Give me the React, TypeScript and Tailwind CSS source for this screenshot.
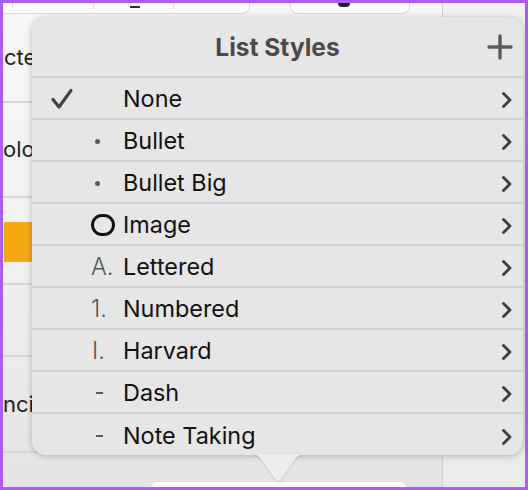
import React from "react";

const font = { fontFamily: "Inter, 'Noto Sans', sans-serif" };

function Chevron() {
  return (
    <svg width="12" height="16" viewBox="0 0 12 16" className="shrink-0 mt-[2px]">
      <path d="M2.5 1.5 L9 8 L2.5 14.5" fill="none" stroke="#3d3d3d" strokeWidth="2.8" strokeLinecap="round" strokeLinejoin="round" />
    </svg>
  );
}

type Row = { label: string; marker: React.ReactNode };

const Dot = () => <span className="block w-[5px] h-[5px] rounded-full bg-[#5a5a5a] ml-[1px]" />;
const Dash = () => <span className="block w-[7px] h-[2px] bg-[#5a5a5a] ml-[2px]" />;

const rows: Row[] = [
  {
    label: "None",
    marker: (
      <svg width="24" height="22" viewBox="0 0 24 22" className="ml-[-44px]">
        <path d="M3 11.5 L9 19 L21 2.5" fill="none" stroke="#444" strokeWidth="3.2" strokeLinecap="round" strokeLinejoin="round" />
      </svg>
    ),
  },
  { label: "Bullet", marker: <Dot /> },
  { label: "Bullet Big", marker: <Dot /> },
  {
    label: "Image",
    marker: <span className="block w-[24px] h-[22px] rounded-full border-[3.5px] border-[#111] ml-[-3px]" />,
  },
  { label: "Lettered", marker: <span className="text-[#555] font-light text-[23.5px] leading-none ml-[-3px]">A.</span> },
  { label: "Numbered", marker: <span className="text-[#555] font-light text-[23.5px] leading-none ml-[-3px]">1.</span> },
  { label: "Harvard", marker: <span className="text-[#555] font-light text-[23.5px] leading-none ml-[-2px]">I.</span> },
  { label: "Dash", marker: <Dash /> },
  { label: "Note Taking", marker: <Dash /> },
];

export default function App() {
  return (
    <div className="w-[528px] h-[490px] relative overflow-hidden border-[3px] border-[#ad5cf4] bg-[#f4f4f4]" style={font}>
      {/* background app */}
      <div className="flex h-full">
        <div className="w-[439px] flex flex-col bg-gradient-to-b from-[#f7f7f7] via-[#f1f1f1] to-[#e4e4e4]">
          {/* top toolbar */}
          <div className="h-[11px] flex shrink-0">
            <div className="w-[247px] h-[11px] bg-white rounded-br-[8px] border-b border-r border-[#d8d8d8] relative">
              <span className="absolute left-[9px] top-0 h-[6px] w-px bg-[#ddd]" />
              <span className="absolute left-[90px] top-0 h-[6px] w-px bg-[#ddd]" />
              <span className="absolute left-[170px] top-0 h-[6px] w-px bg-[#ddd]" />
              <span className="absolute left-[127px] top-[3px] h-[2px] w-[10px] bg-[#333]" />
            </div>
            <div className="ml-[40px] w-[120px] h-[11px] bg-white rounded-b-[8px] border-b border-x border-[#d8d8d8] relative">
              <span className="absolute left-[47px] top-0 w-[12px] h-[4px] rounded-b-full bg-[#222]" />
            </div>
          </div>
          <div className="h-[89px] shrink-0 flex items-center border-b-2 border-[#d6d6d6]">
            <span className="text-[22px] text-[#222] ml-[1px]">cter</span>
          </div>
          <div className="h-[95px] shrink-0 flex items-center border-b-2 border-[#d6d6d6]">
            <span className="text-[22px] text-[#222]">olor</span>
          </div>
          <div className="h-[87px] shrink-0 flex items-center border-b-2 border-[#d6d6d6]">
            <div className="w-[40px] h-[40px] bg-[#f6a714] ml-[1px] mt-[2px]" />
          </div>
          <div className="h-[72px] shrink-0 border-b-2 border-[#d6d6d6]" />
          <div className="h-[96px] shrink-0 flex items-center border-b-2 border-[#d6d6d6]">
            <span className="text-[22px] text-[#222]">ncing</span>
          </div>
          <div className="flex-1 flex items-end">
            <div className="ml-[147px] w-[257px] h-[6px] bg-white rounded-t-[6px] border-t border-x border-[#ddd]" />
          </div>
        </div>
        <div className="flex-1 border-l border-[#cfcfcf] bg-gradient-to-b from-[#f2f2f2] via-[#e4e4e4] to-[#ececec]" />
      </div>

      {/* popover */}
      <div className="absolute left-[29px] top-[14px] w-[491px] h-[438px] rounded-[14px] bg-[#e6e6e6] shadow-[0_1px_6px_rgba(0,0,0,0.25)] flex flex-col overflow-hidden">
        <div className="h-[59px] shrink-0 relative flex items-center justify-center pt-[2px]">
          <span className="text-[24.5px] font-bold text-[#4a4a4a]">List Styles</span>
          <svg width="26" height="26" viewBox="0 0 26 26" className="absolute right-[10px] top-[17px]">
            <path d="M13 2 V24 M2 13 H24" stroke="#5a5a5a" strokeWidth="3.4" strokeLinecap="round" />
          </svg>
        </div>
        {rows.map((r, i) => (
          <div
            key={r.label}
            className={`border-t-2 border-[#d0d0d0] flex items-center pr-[10px] pt-[2px] ${i === rows.length - 1 ? "flex-1" : "h-[42px] shrink-0"}`}
          >
            <div className="w-[91px] pl-[62px] flex items-center">{r.marker}</div>
            <span className="flex-1 text-[23.4px] text-[#111] leading-none">{r.label}</span>
            <Chevron />
          </div>
        ))}
      </div>
      {/* arrow */}
      <svg width="60" height="30" viewBox="0 0 60 30" className="absolute left-[245px] top-[451px] drop-shadow-[0_1px_1px_rgba(0,0,0,0.15)]">
        <path d="M0 0 C7 0 10 1 13 5 L27 25 Q30 29 33 25 L47 5 C50 1 53 0 60 0 Z" fill="#eeeeee" />
      </svg>
    </div>
  );
}
